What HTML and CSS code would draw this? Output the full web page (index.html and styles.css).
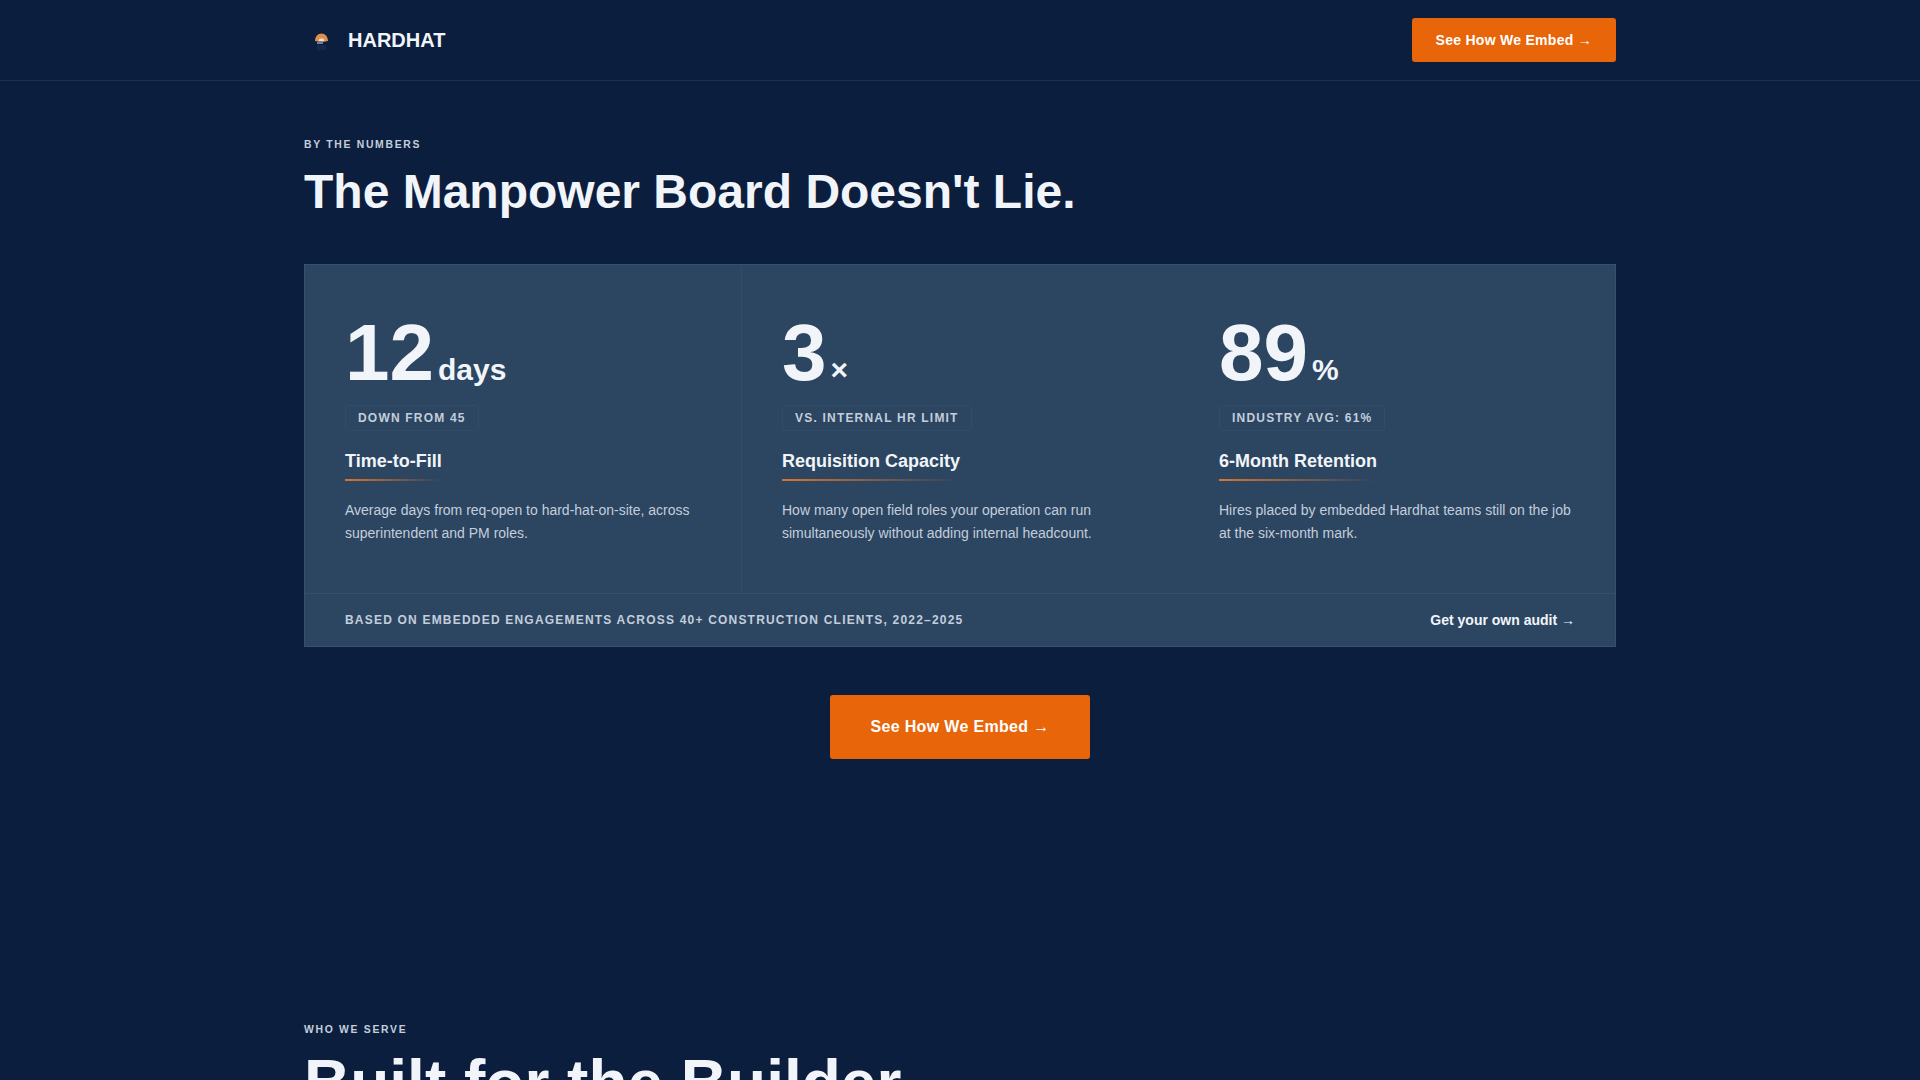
FILE: index.html
```html
<!DOCTYPE html>
<html lang="en">
<head>
    <meta charset="UTF-8">
    <title>Hardhat</title>
    <link rel="stylesheet" href="styles.css">
</head>
<body>
    <header class="site-header">
        <div class="wrap header-row">
            <a class="logo" href="#">
                <svg class="logo-mark" width="32" height="32" viewBox="0 0 32 32">
                    <path d="M11 17c0-4.500 3-7.500 6.500-7.500s6.500 3 6.500 7.500l-3 .5c-.5-2-1.800-3-3.500-3s-3 1-3.500 3z" fill="#e08f4a"/>
                    <path d="M14 17.500c.4-2.200 1.800-3.300 3.500-3.300s3.100 1.100 3.500 3.300z" fill="#f8dfc0"/>
                    <path d="M13 19h6" stroke="#cfe0f0" stroke-width="1"/>
                    <path d="M13 21h9v5h-9z" fill="#13284a"/>
                </svg>
                <span>HARDHAT</span>
            </a>
            <a class="btn btn-small" href="#">See How We Embed →</a>
        </div>
    </header>

    <section class="section numbers">
        <div class="wrap">
            <div class="eyebrow">BY THE NUMBERS</div>
            <h2>The Manpower Board Doesn't Lie.</h2>

            <div class="stats-card">
                <div class="stats-grid">
                    <div class="stat">
                        <div class="stat-value">12<span class="unit">days</span></div>
                        <div class="stat-tag">DOWN FROM 45</div>
                        <h3>Time-to-Fill</h3>
                        <p>Average days from req-open to hard-hat-on-site, across superintendent and PM roles.</p>
                    </div>
                    <div class="stat">
                        <div class="stat-value">3<span class="unit">×</span></div>
                        <div class="stat-tag">VS. INTERNAL HR LIMIT</div>
                        <h3>Requisition Capacity</h3>
                        <p>How many open field roles your operation can run simultaneously without adding internal headcount.</p>
                    </div>
                    <div class="stat">
                        <div class="stat-value">89<span class="unit">%</span></div>
                        <div class="stat-tag">INDUSTRY AVG: 61%</div>
                        <h3>6-Month Retention</h3>
                        <p>Hires placed by embedded Hardhat teams still on the job at the six-month mark.</p>
                    </div>
                </div>
                <div class="stats-foot">
                    <span class="foot-note">BASED ON EMBEDDED ENGAGEMENTS ACROSS 40+ CONSTRUCTION CLIENTS, 2022–2025</span>
                    <a class="foot-link" href="#">Get your own audit →</a>
                </div>
            </div>

            <div class="cta-row">
                <a class="btn btn-large" href="#">See How We Embed →</a>
            </div>
        </div>
    </section>

    <section class="section serve">
        <div class="wrap">
            <div class="eyebrow">WHO WE SERVE</div>
            <h2>Built for the Builder.</h2>
        </div>
    </section>
</body>
</html>
```

FILE: styles.css
```css
* {
    box-sizing: border-box;
}

html, body {
    height: 100%;
    overflow: hidden;
}

body {
    margin: 0;
    background: #0c1e3e;
    color: #f1f5f9;
    font-family: 'Liberation Sans', Arial, sans-serif;
}

a {
    text-decoration: none;
    color: inherit;
}

.wrap {
    width: 1312px;
    margin: 0 auto;
}

.site-header {
    height: 81px;
    border-bottom: 1px solid #1e3250;
}

.header-row {
    height: 80px;
    display: flex;
    align-items: center;
    justify-content: space-between;
}

.logo {
    display: flex;
    align-items: center;
    gap: 12px;
    font-size: 20px;
    font-weight: 700;
    color: #f1f5f9;
}

.btn {
    display: inline-block;
    background: #e8650a;
    color: #fff;
    font-weight: 700;
    border-radius: 3px;
}

.btn-small {
    padding: 13px 24px;
    font-size: 14px;
    line-height: 18px;
    letter-spacing: 0.28px;
}

.btn-large {
    padding: 20px 40px;
    font-size: 16px;
    line-height: 24px;
    letter-spacing: 0.33px;
}

.numbers {
    padding-top: 58px;
}

.eyebrow {
    font-size: 10.4px;
    font-weight: 700;
    letter-spacing: 1.7px;
    color: #c3cedc;
    line-height: 12px;
}

h2 {
    margin: 12px 0 0;
    font-size: 48px;
    line-height: 58px;
    font-weight: 700;
    color: #f1f5f9;
}

.serve h2 {
    margin-top: 9px;
    font-size: 64px;
    line-height: 77px;
}

.stats-card {
    margin-top: 43px;
    background: #2c4561;
    border: 1px solid #37506c;
}

.stats-grid {
    display: grid;
    grid-template-columns: repeat(3, 1fr);
    gap: 1px;
    border-bottom: 1px solid #36506c;
}

.stat {
    padding: 48px 40px 44px;
    min-height: 328px;
}

.stat:first-child {
    box-shadow: 1px 0 0 #324b67;
}

.stat-value {
    display: flex;
    align-items: baseline;
    gap: 4px;
    font-size: 80px;
    line-height: 80px;
    font-weight: 700;
    color: #f1f5f9;
}

.unit {
    font-size: 30px;
    line-height: 30px;
}

.stat-tag {
    display: inline-block;
    margin-top: 12px;
    padding: 5px 12px;
    border: 1px solid #324b67;
    border-radius: 3px;
    font-size: 12px;
    line-height: 14px;
    font-weight: 700;
    letter-spacing: 1.2px;
    color: #c3cedc;
}

h3 {
    position: relative;
    width: fit-content;
    margin: 18px 0 0;
    padding-bottom: 8px;
    font-size: 18px;
    line-height: 24px;
    font-weight: 700;
    color: #f1f5f9;
}

h3::after {
    content: "";
    position: absolute;
    left: 0;
    bottom: 0;
    width: 100%;
    height: 2px;
    background: linear-gradient(90deg, #d9752f, transparent);
}

p {
    margin: 18px 0 0;
    font-size: 14px;
    line-height: 23px;
    color: #c3cedc;
}

.stats-foot {
    display: flex;
    align-items: center;
    justify-content: space-between;
    height: 52px;
    padding: 0 40px;
}

.foot-note {
    font-size: 12px;
    font-weight: 700;
    letter-spacing: 1.2px;
    color: #c3cedc;
}

.foot-link {
    font-size: 14px;
    font-weight: 700;
    color: #f1f5f9;
}

.cta-row {
    margin-top: 48px;
    text-align: center;
}

.serve {
    padding-top: 265px;
}
```
